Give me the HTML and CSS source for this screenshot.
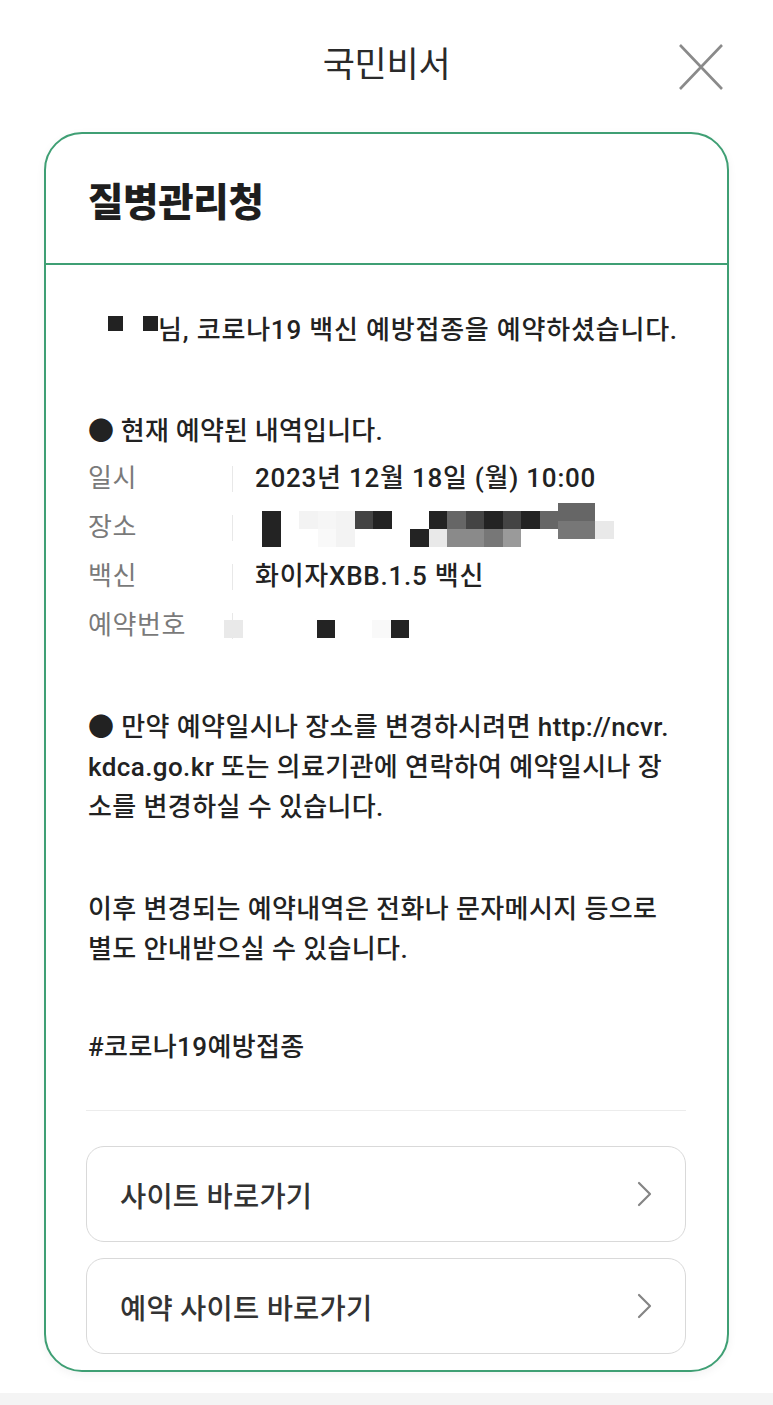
FILE: index.html
```html
<!DOCTYPE html>
<html lang="ko">
<head>
<meta charset="utf-8">
<title>국민비서</title>
<link rel="stylesheet" href="styles.css">
</head>
<body>
<header class="topbar">
  <span></span>
  <h1 class="app-title">국민비서</h1>
  <button class="close" aria-label="닫기">
    <svg width="44" height="46" viewBox="0 0 44 46"><path d="M1 1 L43 45 M43 1 L1 45" stroke="#8a8a8a" stroke-width="2.6" fill="none"/></svg>
  </button>
</header>

<main class="card">
  <div class="card-head">
    <h2 class="sender">질병관리청</h2>
  </div>
  <div class="card-body">
    <p class="greeting"><span class="dot-mask"></span><span class="dot-mask second"></span>님, 코로나19 백신 예방접종을 예약하셨습니다.</p>

    <p class="info-title">● 현재 예약된 내역입니다.</p>
    <div class="info">
      <div class="row">
        <span class="label">일시</span><span class="sep"></span><span class="value">2023년 12월 18일 (월) 10:00</span>
      </div>
      <div class="row">
        <span class="label">장소</span><span class="sep"></span>
        <span class="value mosaic place">
          <i class="m c1" style="grid-area:2/1/6/2"></i>
          <i class="m f1" style="grid-area:2/3/4/4"></i>
          <i class="m f2" style="grid-area:2/4/4/5"></i>
          <i class="m f3" style="grid-area:4/4/6/5"></i>
          <i class="m f1" style="grid-area:2/5/6/6"></i>
          <i class="m c2" style="grid-area:2/6/4/7"></i>
          <i class="m c1" style="grid-area:2/7/4/8"></i>
          <i class="m c1" style="grid-area:4/9/6/10"></i>
          <i class="m c1" style="grid-area:2/10/4/11"></i>
          <i class="m c3" style="grid-area:2/11/4/12"></i>
          <i class="m c2" style="grid-area:2/12/4/13"></i>
          <i class="m c1" style="grid-area:2/13/4/14"></i>
          <i class="m c2" style="grid-area:2/14/4/15"></i>
          <i class="m c1" style="grid-area:2/15/4/16"></i>
          <i class="m c3" style="grid-area:2/16/4/17"></i>
          <i class="m f4" style="grid-area:4/10/6/11"></i>
          <i class="m c4" style="grid-area:4/11/6/12"></i>
          <i class="m c4" style="grid-area:4/12/6/13"></i>
          <i class="m c5" style="grid-area:4/13/6/14"></i>
          <i class="m c6" style="grid-area:4/14/6/15"></i>
          <i class="m c3" style="grid-area:1/17/3/18"></i>
          <i class="m c3" style="grid-area:1/18/3/19"></i>
          <i class="m c5" style="grid-area:3/17/5/18"></i>
          <i class="m c5" style="grid-area:3/18/5/19"></i>
          <i class="m f4" style="grid-area:3/19/5/20"></i>
        </span>
      </div>
      <div class="row">
        <span class="label">백신</span><span class="sep"></span><span class="value">화이자XBB.1.5 백신</span>
      </div>
      <div class="row">
        <span class="label">예약번호</span><span class="sep"></span>
        <span class="value mosaic number">
          <i class="m f4" style="grid-column:1"></i>
          <i class="m c1" style="grid-column:6"></i>
          <i class="m f3" style="grid-column:9"></i>
          <i class="m c1" style="grid-column:10"></i>
        </span>
      </div>
    </div>

    <p class="para">● 만약 예약일시나 장소를 변경하시려면 http://ncvr.<br>kdca.go.kr 또는 의료기관에 연락하여 예약일시나 장<br>소를 변경하실 수 있습니다.</p>

    <p class="para second">이후 변경되는 예약내역은 전화나 문자메시지 등으로<br>별도 안내받으실 수 있습니다.</p>

    <p class="para tag">#코로나19예방접종</p>

    <hr class="divider">

    <div class="links">
      <a class="link-btn" href="#">
        <span>사이트 바로가기</span>
        <svg width="16" height="26" viewBox="0 0 16 26"><path d="M2 2 L13 13 L2 24" stroke="#858585" stroke-width="2.2" fill="none" stroke-linecap="round" stroke-linejoin="round"/></svg>
      </a>
      <a class="link-btn" href="#">
        <span>예약 사이트 바로가기</span>
        <svg width="16" height="26" viewBox="0 0 16 26"><path d="M2 2 L13 13 L2 24" stroke="#858585" stroke-width="2.2" fill="none" stroke-linecap="round" stroke-linejoin="round"/></svg>
      </a>
    </div>
  </div>
</main>
<div class="bottom-strip"></div>
</body>
</html>
```

FILE: styles.css
```css
* { box-sizing: border-box; }
html, body {
  margin: 0;
  padding: 0;
  background: #ffffff;
}
body {
  font-family: Roboto, "Noto Sans CJK KR", sans-serif;
  color: #222222;
  width: 773px;
  height: 1405px;
  overflow: hidden;
  display: flex;
  flex-direction: column;
}

.topbar {
  height: 132px;
  display: grid;
  grid-template-columns: 1fr auto 1fr;
  align-items: center;
  flex-shrink: 0;
}
.app-title {
  margin: 0;
  font-size: 35px;
  font-weight: 400;
  color: #2a2a2a;
  line-height: 46px;
  letter-spacing: -0.3px;
}
.close {
  justify-self: end;
  margin-right: 50px;
  margin-top: 1px;
  padding: 0;
  border: 0;
  background: none;
  width: 44px;
  height: 46px;
  display: flex;
}

.card {
  margin: 0 44px;
  border: 2px solid #3f9f74;
  border-radius: 38px;
  background: #fff;
  box-shadow: 0 3px 10px rgba(0,0,0,0.05);
  flex-shrink: 0;
}
.card-head {
  border-bottom: 2px solid #3f9f74;
  padding: 43px 42px 34px;
}
.sender {
  margin: 0;
  font-size: 38.5px;
  font-weight: 900;
  line-height: 52px;
  color: #1e1e1e;
  letter-spacing: -0.3px;
}

.card-body {
  padding: 45px 41px 16px 40px;
}
.greeting {
  margin: 0;
  text-align: center;
  font-size: 26px;
  line-height: 40px;
  font-weight: 500;
  letter-spacing: 0.8px;
  padding-left: 14px;
  white-space: nowrap;
}
.dot-mask {
  display: inline-block;
  width: 15px;
  height: 15px;
  background: #222;
  vertical-align: 8px;
  margin-right: 20px;
}
.dot-mask.second { margin-right: 0; }

.info-title {
  margin: 61px 0 0;
  font-size: 26px;
  line-height: 40px;
  font-weight: 500;
  letter-spacing: 0.2px;
  padding-left: 2px;
}
.info {
  margin-top: 3px;
}
.row {
  display: grid;
  grid-template-columns: 146px 1px 1fr;
  align-items: center;
  height: 49px;
  font-size: 26px;
  line-height: 49px;
}
.label {
  color: #7a7a7a;
  font-weight: 400;
  padding-left: 2px;
  letter-spacing: 0.6px;
}
.sep {
  height: 26px;
  background: #e8e8e8;
}
.value {
  padding-left: 22px;
  font-weight: 500;
  letter-spacing: 0.75px;
  white-space: nowrap;
}

.mosaic { display: grid; padding: 0; }
.mosaic .m { display: block; }
.place {
  margin-left: 29px;
  align-self: start;
  grid-template-columns: repeat(19, 18.5px);
  grid-template-rows: 8px 10px 8px 10px 8px;
}
.number {
  margin-left: -9px;
  margin-top: 6px;
  grid-template-columns: repeat(10, 18.5px);
  grid-template-rows: 18px;
  position: relative;
}
.c1 { background: #232323; }
.c2 { background: #444444; }
.c3 { background: #666666; }
.c4 { background: #8a8a8a; }
.c5 { background: #777777; }
.c6 { background: #9a9a9a; }
.f1 { background: #f3f3f3; }
.f2 { background: #f6f6f6; }
.f3 { background: #f9f9f9; }
.f4 { background: #e9e9e9; }

.para {
  margin: 57px 0 0;
  font-size: 26px;
  line-height: 40px;
  font-weight: 500;
  letter-spacing: 0.4px;
  padding-left: 2px;
  white-space: nowrap;
}
.para.second { margin-top: 62px; }
.para.tag { margin-top: 58px; }

.divider {
  margin: 43px 0 0;
  border: 0;
  height: 1px;
  background: #ececec;
}

.links {
  margin-top: 35px;
  display: flex;
  flex-direction: column;
  gap: 16px;
}
.link-btn {
  height: 96px;
  border: 1.5px solid #d9d9d9;
  border-radius: 18px;
  display: flex;
  align-items: center;
  justify-content: space-between;
  padding: 0 32px 0 33px;
  text-decoration: none;
  color: #333;
  font-size: 28.5px;
  font-weight: 500;
  letter-spacing: 0.2px;
}

.bottom-strip {
  margin-top: auto;
  height: 12px;
  background: #f4f4f4;
}
```
